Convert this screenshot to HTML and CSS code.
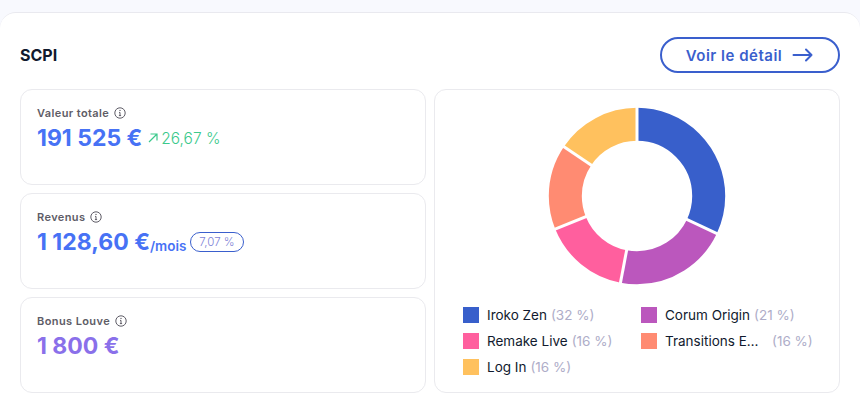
FILE: index.html
```html
<!DOCTYPE html>
<html lang="fr">
<head>
  <title>SCPI</title>
  <meta charset="utf-8">
  <link rel="stylesheet" href="styles.css">
</head>
<body>
  <div class="panel">
    <div class="panel-head">
      <h2 class="panel-title">SCPI</h2>
      <a class="detail-btn" href="#">Voir le détail
        <svg width="22" height="14" viewBox="0 0 22 14" fill="none" stroke="#3a5fcd" stroke-width="2" stroke-linecap="round" stroke-linejoin="round"><path d="M1.5 7h18M14 1.5L19.5 7 14 12.5"/></svg>
      </a>
    </div>
    <div class="panel-body">
      <div class="stats">
        <div class="box stat">
          <div class="stat-label">Valeur totale
            <svg class="info" viewBox="0 0 12 12"><circle cx="6" cy="6" r="5.2"/><path d="M6 5.4v3.2M4.9 8.6h2.2M5 5.4h1"/><circle class="dot" cx="6" cy="3.4" r=".7"/></svg>
          </div>
          <div class="stat-line">
            <span class="amount blue">191 525 €</span>
            <svg class="trend" width="10" height="10" viewBox="0 0 10 10" fill="none" stroke="#3cc98c" stroke-width="1.2"><path d="M1 9L9 1M2.5 1H9v6.5"/></svg>
            <span class="gain">26,67 %</span>
          </div>
        </div>
        <div class="box stat">
          <div class="stat-label">Revenus
            <svg class="info" viewBox="0 0 12 12"><circle cx="6" cy="6" r="5.2"/><path d="M6 5.4v3.2M4.9 8.6h2.2M5 5.4h1"/><circle class="dot" cx="6" cy="3.4" r=".7"/></svg>
          </div>
          <div class="stat-line">
            <span class="amount blue">1 128,60 €</span><span class="unit">/mois</span>
            <span class="pill">7,07 %</span>
          </div>
        </div>
        <div class="box stat">
          <div class="stat-label">Bonus Louve
            <svg class="info" viewBox="0 0 12 12"><circle cx="6" cy="6" r="5.2"/><path d="M6 5.4v3.2M4.9 8.6h2.2M5 5.4h1"/><circle class="dot" cx="6" cy="3.4" r=".7"/></svg>
          </div>
          <div class="stat-line">
            <span class="amount violet">1 800 €</span>
          </div>
        </div>
      </div>
      <div class="box chart">
        <svg class="donut" width="178" height="178" viewBox="0 0 178 178" fill="none" stroke-width="33">
          <g transform="rotate(-90 89 89)">
            <circle cx="89" cy="89" r="71.7" pathLength="360" stroke="#385fcb" stroke-dasharray="115.2 244.8"/>
            <circle cx="89" cy="89" r="71.7" pathLength="360" stroke="#bb57bd" stroke-dasharray="75.6 284.4" stroke-dashoffset="-115.2"/>
            <circle cx="89" cy="89" r="71.7" pathLength="360" stroke="#ff5f9e" stroke-dasharray="57.2 302.8" stroke-dashoffset="-190.8"/>
            <circle cx="89" cy="89" r="71.7" pathLength="360" stroke="#ff8b72" stroke-dasharray="56 304" stroke-dashoffset="-248"/>
            <circle cx="89" cy="89" r="71.7" pathLength="360" stroke="#ffc15e" stroke-dasharray="56 304" stroke-dashoffset="-304"/>
          </g>
          <g stroke="#fff" stroke-width="3">
            <path d="M89 89V0"/>
            <path d="M89 89V0" transform="rotate(115.2 89 89)"/>
            <path d="M89 89V0" transform="rotate(190.8 89 89)"/>
            <path d="M89 89V0" transform="rotate(248 89 89)"/>
            <path d="M89 89V0" transform="rotate(304 89 89)"/>
          </g>
        </svg>
        <ul class="legend">
          <li><i class="swatch" style="background:#385fcb"></i><span class="name">Iroko Zen</span><span class="share">(32 %)</span></li>
          <li><i class="swatch" style="background:#bb57bd"></i><span class="name">Corum Origin</span><span class="share">(21 %)</span></li>
          <li><i class="swatch" style="background:#ff5f9e"></i><span class="name">Remake Live</span><span class="share">(16 %)</span></li>
          <li><i class="swatch" style="background:#ff8b72"></i><span class="name clipped">Transitions E…</span><span class="share">(16 %)</span></li>
          <li><i class="swatch" style="background:#ffc15e"></i><span class="name">Log In</span><span class="share">(16 %)</span></li>
        </ul>
      </div>
    </div>
  </div>
</body>
</html>
```

FILE: styles.css
```css
html {
  height: 100%;
}
body {
  margin: 0;
  padding: 12px 0 0;
  height: 404px;
  box-sizing: border-box;
  overflow: hidden;
  background: #f8f9fe;
  color: #111a2e;
  font-family: "Inter", "Liberation Sans", sans-serif;
}
.panel {
  background: #fff;
  border-top: 1px solid #e9e9ef;
  border-radius: 16px 16px 0 0;
  height: 392px;
  box-sizing: border-box;
  padding: 24px 20px 0;
}
.panel-head {
  display: flex;
  align-items: center;
  justify-content: space-between;
  height: 36px;
  margin-bottom: 16px;
}
.panel-title {
  margin: 0;
  font-size: 16px;
  font-weight: 700;
}
.detail-btn {
  display: flex;
  align-items: center;
  justify-content: center;
  gap: 10px;
  width: 180px;
  height: 36px;
  box-sizing: border-box;
  border: 2px solid #3a5fcd;
  border-radius: 18px;
  color: #3a5fcd;
  font-size: 15px;
  font-weight: 600;
  letter-spacing: .5px;
  text-decoration: none;
}
.panel-body {
  display: grid;
  grid-template-columns: 406px 406px;
  gap: 8px;
}
.stats {
  display: grid;
  grid-template-rows: repeat(3, 96px);
  gap: 8px;
}
.box {
  background: #fff;
  border: 1px solid #eaeaee;
  border-radius: 12px;
  box-sizing: border-box;
}
.stat {
  padding: 15px 16px;
}
.stat-label {
  display: flex;
  align-items: center;
  gap: 5px;
  height: 15px;
  font-size: 11px;
  font-weight: 600;
  letter-spacing: .4px;
  color: #5e5c66;
}
.info {
  width: 12px;
  height: 12px;
  fill: none;
  stroke: #5e5c66;
  stroke-width: 1;
}
.info .dot {
  fill: #5e5c66;
  stroke: none;
}
.stat-line {
  display: flex;
  align-items: center;
  height: 30px;
  margin-top: 3px;
}
.amount {
  font-size: 23px;
  font-weight: 700;
}
.blue {
  color: #4772f5;
}
.violet {
  color: #8a70ea;
}
.trend {
  margin: 0 3px 0 6px;
}
.gain {
  font-size: 15.5px;
  font-weight: 300;
  color: #3cc98c;
}
.unit {
  align-self: flex-end;
  margin-bottom: 3px;
  font-size: 13.5px;
  font-weight: 600;
  color: #4772f5;
}
.pill {
  margin-left: 4px;
  padding: 0 8px;
  height: 18px;
  line-height: 18px;
  border: 1px solid #3a5fcd;
  border-radius: 10px;
  font-size: 11.5px;
  font-weight: 300;
  color: #7d7fd6;
}
.chart {
  height: 304px;
  padding: 17px 28px 0;
  display: flex;
  flex-direction: column;
  align-items: center;
}
.legend {
  list-style: none;
  margin: 22px 0 0;
  padding: 0;
  width: 100%;
  display: grid;
  grid-template-columns: 178px 1fr;
  row-gap: 10px;
}
.legend li {
  display: flex;
  align-items: center;
  height: 16px;
  font-size: 13.5px;
  white-space: nowrap;
}
.swatch {
  width: 16px;
  height: 16px;
  margin-right: 8px;
}
.name {
  margin-right: 4px;
}
.clipped {
  width: 107px;
  margin-right: 0;
}
.share {
  color: #aeadc8;
}
```
